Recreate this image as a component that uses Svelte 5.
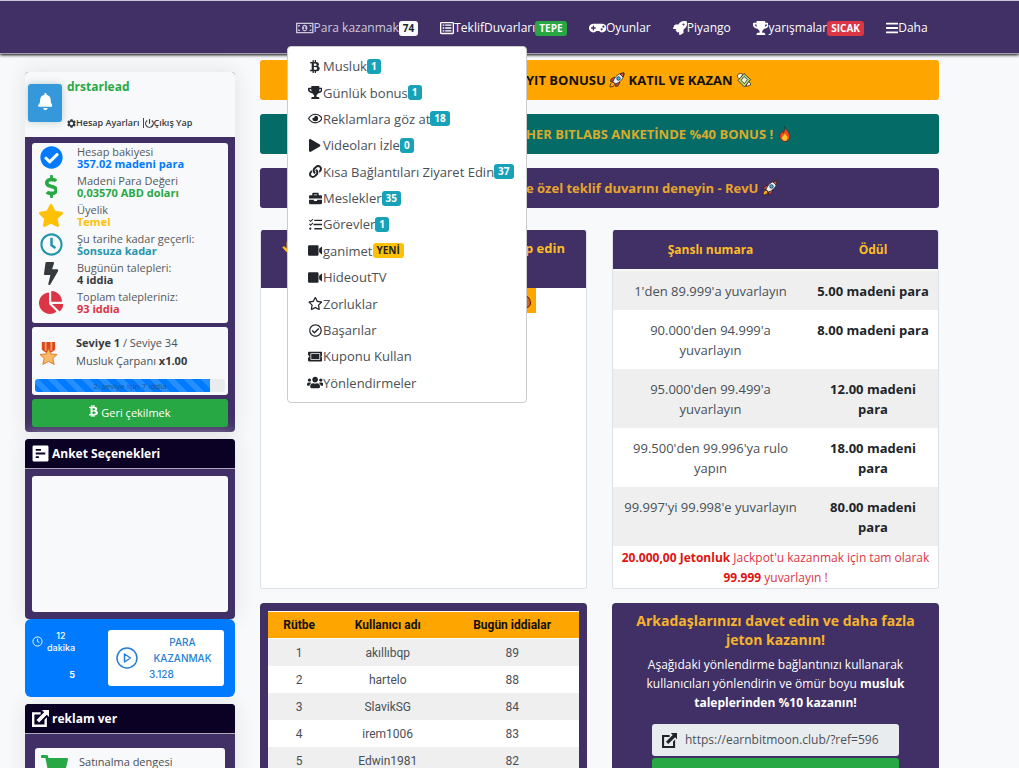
<script lang="ts">
  interface Badge {
    text: string;
    tone: string;
  }

  interface Item {
    icon: string;
    label: string;
    badge?: Badge;
  }

  // [viewBox width, path], every icon is 512 high
  const ICONS: Record<string, [number, string]> = {
    bill: [640, 'M0 64h640v384H0zM48 112v288h544V112zM80 144h70a70 70 0 0 1-70 70zM560 144v70a70 70 0 0 1-70-70zM80 368v-70a70 70 0 0 1 70 70zM560 368h-70a70 70 0 0 1 70-70zM320 136c56 0 98 54 98 120s-42 120-98 120-98-54-98-120 42-120 98-120zM276 190v36h22v68h-26v34h96v-34h-26V190h-34z'],
    list: [512, 'M48 32h416a48 48 0 0 1 48 48v352a48 48 0 0 1-48 48H48a48 48 0 0 1-48-48V80a48 48 0 0 1 48-48zM48 80v352h416V80zM96 128h64v48H96zM192 128h224v48H192zM96 232h64v48H96zM192 232h224v48H192zM96 336h64v48H96zM192 336h224v48H192z'],
    gamepad: [640, 'M480.07 96H160a160 160 0 1 0 114.24 272h91.5A160 160 0 1 0 480.07 96zM248 268a12 12 0 0 1-12 12h-52v52a12 12 0 0 1-12 12h-24a12 12 0 0 1-12-12v-52H84a12 12 0 0 1-12-12v-24a12 12 0 0 1 12-12h52v-52a12 12 0 0 1 12-12h24a12 12 0 0 1 12 12v52h52a12 12 0 0 1 12 12zm216 76a40 40 0 1 1 40-40 40 40 0 0 1-40 40zm64-96a40 40 0 1 1 40-40 40 40 0 0 1-40 40z'],
    rocket: [512, 'M505 19c-1-5-7-11-12-12C461 0 435 0 410 0 307 0 245 55 199 128H95c-16 0-36 12-43 26L3 253a28 28 0 0 0-3 11 24 24 0 0 0 24 24h104l-23 22c-11 12-13 33 0 46l51 51c11 11 32 13 45 0l23-23v104a24 24 0 0 0 24 24 29 29 0 0 0 11-3l98-49c15-7 27-26 27-43V313c72-47 128-109 128-211 0-26 0-51-7-83zM384 168a40 40 0 1 1 40-40 40 40 0 0 1-40 40z'],
    trophy: [576, 'M552 64H448V24c0-13.3-10.7-24-24-24H152c-13.3 0-24 10.7-24 24v40H24C10.7 64 0 74.7 0 88v56c0 35.7 22.5 72.4 61.9 100.7 31.5 22.7 69.8 37.1 110 41.7C203.3 338.5 240 360 240 360v72h-48c-35.3 0-64 20.7-64 56v12c0 6.6 5.4 12 12 12h296c6.6 0 12-5.4 12-12v-12c0-35.3-28.7-56-64-56h-48v-72s36.7-21.5 68.1-73.6c40.3-4.6 78.6-19 110-41.7 39.3-28.3 61.9-65 61.9-100.7V88c0-13.3-10.7-24-24-24zM99.3 192.8C74.9 175.2 64 155.6 64 144v-16h64.2c1 32.6 5.8 61.2 12.8 86.2-15.1-5.2-29.2-12.4-41.7-21.4zM512 144c0 16.1-17.7 36.1-35.3 48.8-12.5 9-26.7 16.2-41.8 21.4 7-25 11.8-53.6 12.8-86.2H512v16z'],
    bars: [448, 'M16 132h416a16 16 0 0 0 16-16V76a16 16 0 0 0-16-16H16A16 16 0 0 0 0 76v40a16 16 0 0 0 16 16zm0 160h416a16 16 0 0 0 16-16v-40a16 16 0 0 0-16-16H16a16 16 0 0 0-16 16v40a16 16 0 0 0 16 16zm0 160h416a16 16 0 0 0 16-16v-40a16 16 0 0 0-16-16H16a16 16 0 0 0-16 16v40a16 16 0 0 0 16 16z'],
    coin: [384, 'M310.204 242.638c27.73-14.18 45.377-39.39 41.28-81.3-5.358-57.351-52.458-76.573-114.85-81.929V0h-48.528v77.203c-12.605 0-25.525.315-38.444.63V0h-48.53v79.409c-17.842.539-38.622.276-97.37 0v51.678c38.314-.678 58.417-3.14 63.023 21.427v217.429c-2.925 19.492-18.524 16.685-53.255 16.071L3.765 443.68c88.481 0 97.37.315 97.37.315V512h48.53v-67.06c13.234.315 26.154.315 38.444.315V512h48.528v-68.005c81.299-4.412 135.647-24.894 142.895-101.467 5.671-61.446-23.314-88.862-69.326-99.89zM150.608 134.553c27.415 0 113.126-8.507 113.126 48.528 0 54.515-85.71 48.212-113.126 48.212v-96.74zm0 251.776V279.821c32.772 0 133.127-9.138 133.127 53.255-.001 60.186-100.355 53.253-133.127 53.253z'],
    eye: [576, 'M288 144a110.94 110.94 0 0 0-31.24 5 55.4 55.4 0 0 1 7.24 27 56 56 0 0 1-56 56 55.4 55.4 0 0 1-27-7.24A111.71 111.71 0 1 0 288 144zm284.52 97.4C518.29 135.59 410.93 64 288 64S57.68 135.64 3.48 241.41a32.35 32.35 0 0 0 0 29.19C57.71 376.41 165.07 448 288 448s230.32-71.64 284.52-177.41a32.35 32.35 0 0 0 0-29.19zM288 400c-98.65 0-189.09-55-237.93-144C98.91 167 189.34 112 288 112s189.09 55 237.93 144C477.1 345 386.66 400 288 400z'],
    play: [448, 'M424.4 214.7L72.4 6.6C43.8-10.3 0 6.1 0 47.9V464c0 37.5 40.7 60.1 72.4 41.3l352-208c31.4-18.5 31.5-64.1 0-82.6z'],
    link: [512, 'M326.612 185.391c59.747 59.809 58.927 155.698.36 214.59-.11.12-.24.25-.36.37l-67.2 67.2c-59.27 59.27-155.699 59.262-214.96 0-59.27-59.26-59.27-155.7 0-214.96l37.106-37.106c9.84-9.84 26.786-3.3 27.294 10.606.648 17.722 3.826 35.527 9.69 52.721 1.986 5.822.567 12.262-3.783 16.612l-13.087 13.087c-28.026 28.026-28.905 73.66-1.155 101.96 28.024 28.579 74.086 28.749 102.325.51l67.2-67.19c28.191-28.191 28.073-73.757 0-101.83-3.701-3.694-7.429-6.564-10.341-8.569a16.037 16.037 0 0 1-6.947-12.606c-.396-10.567 3.348-21.456 11.698-29.806l21.054-21.055c5.521-5.521 14.182-6.199 20.584-1.731a152.482 152.482 0 0 1 20.522 17.197zM467.547 44.449c-59.261-59.262-155.69-59.27-214.96 0l-67.2 67.2c-.12.12-.25.25-.36.37-58.566 58.892-59.387 154.781.36 214.59a152.454 152.454 0 0 0 20.521 17.196c6.402 4.468 15.064 3.789 20.584-1.731l21.054-21.055c8.35-8.35 12.094-19.239 11.698-29.806a16.037 16.037 0 0 0-6.947-12.606c-2.912-2.005-6.64-4.875-10.341-8.569-28.073-28.073-28.191-73.639 0-101.83l67.2-67.19c28.239-28.239 74.3-28.069 102.325.51 27.75 28.3 26.872 73.934-1.155 101.96l-13.087 13.087c-4.35 4.35-5.769 10.79-3.783 16.612 5.864 17.194 9.042 34.999 9.69 52.721.509 13.906 17.454 20.446 27.294 10.606l37.106-37.106c59.271-59.259 59.271-155.699.001-214.959z'],
    briefcase: [512, 'M320 336c0 8.84-7.16 16-16 16h-96c-8.84 0-16-7.16-16-16v-32H0v128c0 25.6 22.4 48 48 48h416c25.6 0 48-22.4 48-48V304H320v32zm144-208h-80V80c0-25.6-22.4-48-48-48H176c-25.6 0-48 22.4-48 48v48H48c-25.6 0-48 22.4-48 48v80h512v-80c0-25.6-22.4-48-48-48zm-144 0H192V96h128v32z'],
    tasks: [512, 'M208 64h304v56H208zM176 228h336v56H176zM208 392h304v56H208zM0 96l28-28 36 36 76-76 28 28L64 160zM0 248l28-28 36 36 76-76 28 28L64 312zM52 376a44 44 0 1 1 0 88 44 44 0 0 1 0-88z'],
    video: [576, 'M48 48h320a48 48 0 0 1 48 48v320a48 48 0 0 1-48 48H48a48 48 0 0 1-48-48V96a48 48 0 0 1 48-48zM440 190l90-78c24-16 46-3 46 22v244c0 25-22 38-46 22l-90-78z'],
    star: [576, 'M259.3 17.8L194 150.2 47.9 171.5c-26.2 3.8-36.7 36.1-17.7 54.6l105.7 103-25 145.5c-4.5 26.3 23.2 46 46.4 33.7L288 439.6l130.7 68.7c23.2 12.2 50.9-7.4 46.4-33.7l-25-145.5 105.7-103c19-18.5 8.5-50.8-17.7-54.6L382 150.2 316.7 17.8c-11.7-23.6-45.6-23.9-57.4 0z'],
    starLine: [576, 'M528.1 171.5L382 150.2 316.7 17.8c-11.7-23.6-45.6-23.9-57.4 0L194 150.2 47.9 171.5c-26.2 3.8-36.7 36.1-17.7 54.6l105.7 103-25 145.5c-4.5 26.3 23.2 46 46.4 33.7L288 439.6l130.7 68.7c23.2 12.2 50.9-7.4 46.4-33.7l-25-145.5 105.7-103c19-18.5 8.5-50.8-17.7-54.6zM388.6 312.3l23.7 138.4L288 385.4l-124.3 65.3 23.7-138.4-100.6-98 139-20.2 62.2-126 62.2 126 139 20.2-100.6 98z'],
    checkLine: [512, 'M256 8C119.033 8 8 119.033 8 256s111.033 248 248 248 248-111.033 248-248S392.967 8 256 8zm0 48c110.532 0 200 89.451 200 200 0 110.532-89.451 200-200 200-110.532 0-200-89.451-200-200 0-110.532 89.451-200 200-200m140.204 130.267l-22.536-22.718c-4.667-4.705-12.265-4.736-16.97-.068L215.346 303.697l-59.792-60.277c-4.667-4.705-12.265-4.736-16.97-.069l-22.719 22.536c-4.705 4.667-4.736 12.265-.068 16.971l90.781 91.516c4.667 4.705 12.265 4.736 16.97.068l172.589-171.204c4.704-4.668 4.734-12.266.067-16.971z'],
    ticket: [576, 'M128 160h320v192H128V160zm400 96c0 26.51 21.49 48 48 48v96c0 26.51-21.49 48-48 48H48c-26.51 0-48-21.49-48-48v-96c26.51 0 48-21.49 48-48s-21.49-48-48-48v-96c0-26.51 21.49-48 48-48h480c26.51 0 48 21.49 48 48v96c-26.51 0-48 21.49-48 48zm-48-104c0-13.255-10.745-24-24-24H120c-13.255 0-24 10.745-24 24v208c0 13.255 10.745 24 24 24h336c13.255 0 24-10.745 24-24V152z'],
    users: [640, 'M96 224c35.3 0 64-28.7 64-64s-28.7-64-64-64-64 28.7-64 64 28.7 64 64 64zm448 0c35.3 0 64-28.7 64-64s-28.7-64-64-64-64 28.7-64 64 28.7 64 64 64zm32 32h-64c-17.6 0-33.5 7.1-45.1 18.6 40.3 22.1 68.9 62 75.1 109.4h66c17.7 0 32-14.3 32-32v-32c0-35.3-28.7-64-64-64zm-256 0c61.9 0 112-50.1 112-112S381.9 32 320 32 208 82.1 208 144s50.1 112 112 112zm76.8 32h-8.3c-20.8 10-43.9 16-68.5 16s-47.6-6-68.5-16h-8.3C179.6 288 128 339.6 128 403.2V432c0 26.5 21.5 48 48 48h288c26.5 0 48-21.5 48-48v-28.8c0-63.6-51.6-115.2-115.2-115.2zm-223.7-13.4C161.5 263.1 145.6 256 128 256H64c-35.3 0-64 28.7-64 64v32c0 17.7 14.3 32 32 32h65.9c6.3-47.4 34.9-87.3 75.2-109.4z'],
    bell: [448, 'M224 512c35.32 0 63.97-28.65 63.97-64H160.03c0 35.35 28.65 64 63.97 64zm215.39-149.71c-19.32-20.76-55.47-51.99-55.47-154.29 0-77.7-54.48-139.9-127.94-155.16V32c0-17.67-14.32-32-31.98-32s-31.98 14.33-31.98 32v20.84C118.56 68.1 64.08 130.3 64.08 208c0 102.3-36.15 133.53-55.47 154.29-6 6.45-8.66 14.16-8.61 21.71.11 16.4 12.98 32 32.1 32h383.8c19.12 0 32-15.6 32.1-32 .05-7.55-2.61-15.27-8.61-21.71z'],
    cog: [512, 'M487.4 315.7l-42.6-24.6c4.3-23.2 4.3-47 0-70.2l42.6-24.6c4.9-2.8 7.1-8.6 5.5-14-11.1-35.6-30-67.8-54.7-94.6-3.8-4.1-10-5.1-14.8-2.3L380.8 110c-17.9-15.4-38.5-27.3-60.8-35.1V25.8c0-5.6-3.9-10.5-9.4-11.7-36.7-8.2-74.3-7.8-109.2 0-5.5 1.2-9.4 6.1-9.4 11.7V75c-22.2 7.9-42.8 19.8-60.8 35.1L88.7 85.5c-4.9-2.8-11-1.9-14.8 2.3-24.7 26.7-43.6 58.9-54.7 94.6-1.7 5.4.6 11.2 5.5 14L67.3 221c-4.3 23.2-4.3 47 0 70.2l-42.6 24.6c-4.9 2.8-7.1 8.6-5.5 14 11.1 35.6 30 67.8 54.7 94.6 3.8 4.1 10 5.1 14.8 2.3l42.6-24.6c17.9 15.4 38.5 27.3 60.8 35.1v49.2c0 5.6 3.9 10.5 9.4 11.7 36.7 8.2 74.3 7.8 109.2 0 5.5-1.2 9.4-6.1 9.4-11.7v-49.2c22.2-7.9 42.8-19.8 60.8-35.1l42.6 24.6c4.9 2.8 11 1.9 14.8-2.3 24.7-26.7 43.6-58.9 54.7-94.6 1.5-5.5-.7-11.3-5.6-14.1zM256 352a96 96 0 1 1 0-192 96 96 0 0 1 0 192z'],
    power: [512, 'M400 54a248 248 0 1 1-290 1l30 54a184 184 0 1 0 230-1zM224 0h64v272h-64z'],
    check: [512, 'M504 256c0 136.967-111.033 248-248 248S8 392.967 8 256 119.033 8 256 8s248 111.033 248 248zM227.314 387.314l184-184c6.248-6.248 6.248-16.379 0-22.627l-22.627-22.627c-6.248-6.249-16.379-6.249-22.628 0L216 308.118l-70.059-70.059c-6.248-6.248-16.379-6.248-22.628 0l-22.627 22.627c-6.248 6.248-6.248 16.379 0 22.627l104 104c6.249 6.249 16.379 6.249 22.628.001z'],
    dollar: [288, 'M209.2 233.4l-108-31.6C88.7 198.2 80 186.5 80 173.5c0-16.3 13.2-29.5 29.5-29.5h66.3c12.2 0 24.2 3.7 34.2 10.5 6.1 4.1 14.3 3.1 19.5-2l34.8-34c7.1-6.9 6.1-18.4-1.8-24.5C238 74.8 207.4 64.1 176 64V16c0-8.8-7.2-16-16-16h-32c-8.8 0-16 7.2-16 16v48h-2.5C45.8 64-5.4 118.7.5 183.6c4.2 46.1 39.4 83.6 83.8 96.6l102.5 30c12.5 3.7 21.2 15.3 21.2 28.3 0 16.3-13.2 29.5-29.5 29.5h-66.3C100 368 88 364.3 78 357.5c-6.1-4.1-14.3-3.1-19.5 2l-34.8 34c-7.1 6.9-6.1 18.4 1.8 24.5 24.5 19.2 55.1 29.9 86.5 30v48c0 8.8 7.2 16 16 16h32c8.8 0 16-7.2 16-16v-48.2c46.6-.9 90.3-28.6 105.7-72.7 21.5-61.6-14.6-124.8-72.5-141.7z'],
    clock: [512, 'M256 8C119 8 8 119 8 256s111 248 248 248 248-111 248-248S393 8 256 8zm0 448c-110.5 0-200-89.5-200-200S145.5 56 256 56s200 89.5 200 200-89.5 200-200 200zm61.8-104.4l-84.9-61.7c-3.1-2.3-4.9-5.9-4.9-9.7V116c0-6.6 5.4-12 12-12h32c6.6 0 12 5.4 12 12v141.7l66.8 48.6c5.4 3.9 6.5 11.4 2.6 16.8L334.6 349c-3.9 5.3-11.4 6.5-16.8 2.6z'],
    bolt: [320, 'M296 160H180.6l42.6-129.8C227.2 15 215.7 0 200 0H56C44 0 33.8 8.9 32.2 20.8l-32 240C-1.7 275.2 9.5 288 24 288h118.7L96.6 482.5c-3.6 15.2 8 29.5 23.3 29.5 8.4 0 16.4-4.4 20.8-12l176-304c9.3-15.9-2.2-36-20.7-36z'],
    pie: [544, 'M527.79 288H290.5l158.03 158.03c6.04 6.04 15.98 6.53 22.19.68 38.7-36.46 65.32-85.61 73.13-140.86 1.34-9.46-6.51-17.85-16.06-17.85zm-15.83-64.8C503.72 103.74 408.26 8.28 288.8.04 279.68-.59 272 7.1 272 16.24V240h223.77c9.14 0 16.82-7.68 16.19-16.8zM224 288V50.71c0-9.55-8.39-17.4-17.84-16.06C86.99 51.49-4.1 155.6.14 280.37 4.5 408.51 114.83 513.59 243.03 511.98c50.4-.63 96.97-16.87 135.26-44.03 7.9-5.6 8.42-17.23 1.57-24.08L224 288z'],
    poll: [512, 'M56 16h400a40 40 0 0 1 40 40v400a40 40 0 0 1-40 40H56a40 40 0 0 1-40-40V56a40 40 0 0 1 40-40zM112 120v56h160v-56zM112 228v56h288v-56zM112 336v56h96v-56z'],
    external: [512, 'M300 0h212v212l-66-66-232 232-80-80L366 66zM0 64h260v72H72v304h304V290l72-72v294H0z'],
    cart: [576, 'M528.12 301.319l47.273-208C578.806 78.301 567.391 64 551.99 64H159.208l-9.166-44.81C147.758 8.021 137.93 0 126.529 0H24C10.745 0 0 10.745 0 24v16c0 13.255 10.745 24 24 24h69.883l70.248 343.435C147.325 417.1 136 435.222 136 456c0 30.928 25.072 56 56 56s56-25.072 56-56c0-15.674-6.447-29.835-16.824-40h209.647C430.447 426.165 424 440.326 424 456c0 30.928 25.072 56 56 56s56-25.072 56-56c0-22.172-12.888-41.332-31.579-50.405l5.517-24.276c3.413-15.018-8.002-29.319-23.403-29.319H218.117l-6.545-32h293.145c11.206 0 20.92-7.754 23.403-18.681z'],
    down: [448, 'M180 32h88v268l106-106 62 62-212 224L12 256l62-62 106 106z'],
  };

  const info = (text: string): Badge => ({ text, tone: 'info' });

  const NAV: Item[] = [
    { icon: 'list', label: 'TeklifDuvarları', badge: { text: 'TEPE', tone: 'success' } },
    { icon: 'gamepad', label: 'Oyunlar' },
    { icon: 'rocket', label: 'Piyango' },
    { icon: 'trophy', label: 'yarışmalar', badge: { text: 'SICAK', tone: 'danger' } },
    { icon: 'bars', label: 'Daha' },
  ];

  const MENU: Item[] = [
    { icon: 'coin', label: 'Musluk', badge: info('1') },
    { icon: 'trophy', label: 'Günlük bonus', badge: info('1') },
    { icon: 'eye', label: 'Reklamlara göz at', badge: info('18') },
    { icon: 'play', label: 'Videoları İzle', badge: info('0') },
    { icon: 'link', label: 'Kısa Bağlantıları Ziyaret Edin', badge: info('37') },
    { icon: 'briefcase', label: 'Meslekler', badge: info('35') },
    { icon: 'tasks', label: 'Görevler', badge: info('1') },
    { icon: 'video', label: 'ganimet', badge: { text: 'YENİ', tone: 'warning' } },
    { icon: 'video', label: 'HideoutTV' },
    { icon: 'starLine', label: 'Zorluklar' },
    { icon: 'checkLine', label: 'Başarılar' },
    { icon: 'ticket', label: 'Kuponu Kullan' },
    { icon: 'users', label: 'Yönlendirmeler' },
  ];

  const STATS = [
    { icon: 'check', label: 'Hesap bakiyesi', value: '357.02 madeni para', tone: 'primary' },
    { icon: 'dollar', label: 'Madeni Para Değeri', value: '0,03570 ABD doları', tone: 'green' },
    { icon: 'star', label: 'Üyelik', value: 'Temel', tone: 'yellow' },
    { icon: 'clock', label: 'Şu tarihe kadar geçerli:', value: 'Sonsuza kadar', tone: 'teal' },
    { icon: 'bolt', label: 'Bugünün talepleri:', value: '4 iddia', tone: 'dark' },
    { icon: 'pie', label: 'Toplam talepleriniz:', value: '93 iddia', tone: 'red' },
  ];

  const PRIZES = [
    ["1'den 89.999'a yuvarlayın", '5.00 madeni para'],
    ["90.000'den 94.999'a yuvarlayın", '8.00 madeni para'],
    ["95.000'den 99.499'a yuvarlayın", '12.00 madeni para'],
    ["99.500'den 99.996'ya rulo yapın", '18.00 madeni para'],
    ["99.997'yi 99.998'e yuvarlayın", '80.00 madeni para'],
  ];

  const LEADERS: [string, number][] = [
    ['akıllıbqp', 89],
    ['hartelo', 88],
    ['SlavikSG', 84],
    ['irem1006', 83],
    ['Edwin1981', 82],
  ];

  const progress = 92;
  let menuOpen = $state(true);
</script>

{#snippet icon(name: string)}
  <svg class="icon" viewBox="0 0 {ICONS[name][0]} 512" aria-hidden="true">
    <path fill-rule="evenodd" d={ICONS[name][1]} />
  </svg>
{/snippet}

{#snippet badge(b?: Badge)}
  {#if b}<span class="badge {b.tone}">{b.text}</span>{/if}
{/snippet}

{#snippet rocketEmoji()}
  <svg class="emoji" viewBox="0 0 32 32" aria-hidden="true" stroke="#222" stroke-width="1.5" stroke-linejoin="round">
    <path fill="#e8453c" d="M12 10 4 14l-1 5 7-1zM22 20l-4 8-5 1 1-7z" />
    <path fill="#e7edf1" d="M8 19C11 10 19 2 30 2c0 11-8 19-17 22z" />
    <path fill="#e8453c" d="M22 4c3-1.500 5-2 8-2 0 3-.5 5-2 8z" />
    <circle cx="19" cy="13" r="3.500" fill="#35b8f1" />
    <path fill="#ffa51f" d="M8 20c-4 1-6 5-6 10 5 0 9-2 10-6z" />
  </svg>
{/snippet}

<nav class="navbar">
  <div class="nav-item">
    <button class="nav-link active" aria-expanded={menuOpen} onclick={() => (menuOpen = !menuOpen)}>
      {@render icon('bill')}Para kazanmak{@render badge({ text: '74', tone: 'light' })}
    </button>
    {#if menuOpen}
      <ul class="menu">
        {#each MENU as item}
          <li>
            <a href="#menu">
              <span class="menu-icon">{@render icon(item.icon)}</span>{item.label}{@render badge(item.badge)}
            </a>
          </li>
        {/each}
      </ul>
    {/if}
  </div>
  {#each NAV as item}
    <a class="nav-link" href="#nav">{@render icon(item.icon)}{item.label}{@render badge(item.badge)}</a>
  {/each}
</nav>

<div class="page">
  <aside>
    <section class="card account">
      <header class="profile">
        <button class="bell" aria-label="Bildirimler">{@render icon('bell')}</button>
        <div class="who">
          <strong>drstarlead</strong>
          <div class="links">
            <a href="#settings">{@render icon('cog')}Hesap Ayarları</a>
            <i></i><a href="#logout">{@render icon('power')}Çıkış Yap</a>
          </div>
        </div>
      </header>
      <div class="body">
        <div class="box stats">
          {#each STATS as stat}
            <div class="stat {stat.tone}">
              <span class="stat-icon">{@render icon(stat.icon)}</span>
              <div><span>{stat.label}</span><b>{stat.value}</b></div>
            </div>
          {/each}
        </div>
        <div class="box level">
          <div class="level-row">
            <svg class="medal" viewBox="0 0 20 26" aria-hidden="true">
              <path fill="#d9481c" d="M3 1h14v8l-4 3H7L3 9z" />
              <path fill="#f59a6c" d="M6 1h2v9H6zM12 1h2v9h-2z" />
              <path fill="#fbb867" stroke="#d9782d" d="m10 8 2.500 5.500 6.500 .5-4.500 4.200 1.500 6.300L10 21.300 4 24.500 5.500 18.200 1 14l6.500-.5z" />
            </svg>
            <p><b>Seviye 1</b> / Seviye 34<br />Musluk Çarpanı <b>x1.00</b></p>
          </div>
          <div class="progress">
            <div class="fill" style="width: {progress}%"></div>
            <span>2. seviye için 7 iddia</span>
          </div>
        </div>
        <button class="withdraw">{@render icon('coin')} Geri çekilmek</button>
      </div>
    </section>

    <section class="card">
      <h2>{@render icon('poll')} Anket Seçenekleri</h2>
      <div class="body"><div class="box empty"></div></div>
    </section>

    <section class="survey">
      <div class="time">
        <svg viewBox="0 0 12 12" fill="none" stroke="currentColor" aria-hidden="true">
          <circle cx="6" cy="6" r="5" /><path d="M6 3v3l2 1" />
        </svg>
        <span>12<br />dakika</span>
        <b>5</b>
      </div>
      <button class="earn">
        <svg viewBox="0 0 22 22" fill="none" stroke="currentColor" stroke-width="1.500" aria-hidden="true">
          <circle cx="11" cy="11" r="10" /><path stroke-linejoin="round" d="M8.500 7v8l6-4z" />
        </svg>
        <span>PARA KAZANMAK <em>3.128</em></span>
      </button>
    </section>

    <section class="card ads">
      <h2>{@render icon('external')} reklam ver</h2>
      <div class="body">
        <div class="box buy"><span>{@render icon('cart')}</span>Satınalma dengesi</div>
      </div>
    </section>
  </aside>

  <main>
    <div class="banner orange">
      YIT BONUSU {@render rocketEmoji()} KATIL VE KAZAN
      <svg class="emoji" viewBox="0 0 32 32" aria-hidden="true" stroke="#222" stroke-width="1.5" stroke-linejoin="round">
        <path fill="#f3f6e8" d="M3 6c4-4 8-4 11-1l-6 9c-4-1-6-4-5-8zM22 20c5-1 8 1 7 6l-8 3z" />
        <path fill="#b9d77c" d="m16 3 13 12-12 15L4 17z" />
        <path fill="#eef4da" d="m16 9 7 6-6 8-7-6z" />
      </svg>
    </div>
    <div class="banner green">
      HER BITLABS ANKETİNDE %40 BONUS !
      <svg class="emoji" viewBox="0 0 32 32" aria-hidden="true">
        <path fill="#f04a16" stroke="#222" d="M15 1c1 6 8 8 10 16 3 8-3 14-9 14S4 26 6 18c1-3 3-5 3-8l4 4c2-4 3-8 2-13z" />
        <path fill="#ffc531" d="M16 14c1 5 6 6 5 11-1 3-3 5-5 5s-6-2-6-6 5-5 6-10z" />
      </svg>
    </div>
    <div class="banner purple">e özel teklif duvarını deneyin - RevU {@render rocketEmoji()}</div>

    <div class="columns">
      <section class="claim">
        <header>{@render icon('down')}<span>talep edin</span></header>
        <div class="claim-note">
          <svg class="emoji" viewBox="0 0 32 32" aria-hidden="true">
            <path fill="#d9641e" stroke="#4a1608" stroke-width="2" d="M15 2c9 4 14 11 14 18 0 6-5 10-13 10S3 25 3 19z" />
          </svg>
        </div>
      </section>

      <section class="prizes">
        <table>
          <thead>
            <tr><th>Şanslı numara</th><th>Ödül</th></tr>
          </thead>
          <tbody>
            {#each PRIZES as [range, prize]}
              <tr><td>{range}</td><td><b>{prize}</b></td></tr>
            {/each}
          </tbody>
        </table>
        <p><b>20.000,00 Jetonluk</b> Jackpot'u kazanmak için tam olarak <b>99.999</b> yuvarlayın !</p>
      </section>

      <section class="leaders">
        <table>
          <thead>
            <tr><th>Rütbe</th><th>Kullanıcı adı</th><th>Bugün iddialar</th></tr>
          </thead>
          <tbody>
            {#each LEADERS as [name, claims], i}
              <tr><td>{i + 1}</td><td>{name}</td><td>{claims}</td></tr>
            {/each}
          </tbody>
        </table>
      </section>

      <section class="invite">
        <h3>Arkadaşlarınızı davet edin ve daha fazla jeton kazanın!</h3>
        <p>
          Aşağıdaki yönlendirme bağlantınızı kullanarak kullanıcıları yönlendirin ve ömür boyu
          <b>musluk taleplerinden %10 kazanın!</b>
        </p>
        <label class="ref">
          {@render icon('external')}
          <input aria-label="Yönlendirme bağlantısı" readonly value="https://earnbitmoon.club/?ref=596" />
        </label>
        <button class="copy" aria-label="Bağlantıyı kopyala"></button>
      </section>
    </div>
  </main>
</div>

<style>
  :global(body) {
    margin: 0;
    background: #f8f9fa;
    color: #495057;
    font: 13px/20px 'Open Sans', 'Noto Sans', sans-serif;
  }

  :global(#app) {
    height: 100vh;
    overflow: hidden;
  }

  * {
    box-sizing: border-box;
  }

  a {
    color: inherit;
    text-decoration: none;
  }

  button {
    border: 0;
    padding: 0;
    background: none;
    color: inherit;
    font: inherit;
    cursor: pointer;
  }

  table {
    width: 100%;
    border-collapse: collapse;
    table-layout: fixed;
    text-align: center;
  }

  .icon {
    height: 1em;
    fill: currentColor;
    flex-shrink: 0;
  }

  .emoji {
    width: 16px;
    height: 16px;
    vertical-align: -3px;
  }

  .navbar {
    position: relative;
    z-index: 2;
    display: flex;
    align-items: center;
    gap: 22px;
    height: 54px;
    padding-top: 2px;
    padding-left: 296px;
    background: #413065;
    border-top: 1px solid #c9c5d2;
    border-bottom: 1px solid #a59eb4;
    box-shadow: 0 1px 3px #000;
    color: #fff;
  }

  .nav-item {
    position: relative;
  }

  .nav-link {
    display: flex;
    align-items: center;
    font-size: 12px;
    white-space: nowrap;
  }

  .nav-link .icon {
    height: 14px;
  }

  .nav-link.active {
    color: #cfc9dc;
  }

  .badge {
    padding: 0 4px;
    border-radius: 3px;
    color: #fff;
    font-size: 10px;
    font-weight: 700;
    line-height: 15px;
  }

  .badge.light {
    background: #f8f9fa;
    color: #212529;
  }

  .badge.success {
    background: #28a745;
  }

  .badge.danger {
    background: #dc3545;
  }

  .badge.info {
    background: #17a2b8;
  }

  .badge.warning {
    background: #ffc107;
    color: #212529;
  }

  .menu {
    position: absolute;
    top: 28px;
    left: -9px;
    display: grid;
    grid-auto-rows: 1fr;
    width: 240px;
    height: 357px;
    margin: 0;
    padding: 6px 0;
    border: 1px solid #ccc;
    border-radius: 4px;
    background: #fff;
    color: #495057;
    list-style: none;
  }

  .menu a {
    display: flex;
    align-items: center;
    height: 100%;
    padding-left: 19px;
    white-space: nowrap;
  }

  .menu-icon {
    display: flex;
    justify-content: center;
    width: 16px;
    color: #212529;
  }

  .page {
    display: grid;
    grid-template-columns: 210px 1fr;
    gap: 25px;
    padding: 6px 80px 0 25px;
  }

  aside {
    padding-top: 12px;
  }

  .card {
    margin-bottom: 7px;
    border-radius: 4px;
    background: #413065;
    box-shadow: 0 0 20px #dfe1e4;
    overflow: hidden;
  }

  .body {
    padding: 7px;
  }

  .box {
    border-radius: 3px;
    background: #f8f9fa;
  }

  .profile {
    display: flex;
    gap: 5px;
    height: 65px;
    padding: 5px 3px;
    background: #f8f9fa;
  }

  .bell {
    width: 34px;
    height: 38px;
    margin-top: 7px;
    border-radius: 3px;
    background: #3498db;
    box-shadow: 0 0 8px #bcc;
    color: #fff;
    font-size: 17px;
  }

  .who strong {
    display: block;
    color: #28a745;
    font-size: 12px;
    margin-bottom: 20px;
  }

  .links,
  .links a {
    display: flex;
    align-items: center;
  }

  .links {
    color: #343a40;
    font-size: 9px;
    font-weight: 600;
    line-height: 12px;
    white-space: nowrap;
  }

  .links i {
    width: 1px;
    height: 10px;
    margin: 0 1px 0 3px;
    background: #8a2a20;
  }

  .stats {
    padding: 0 0 6px;
  }

  .stat {
    display: flex;
    align-items: center;
    height: 29px;
    padding-left: 6px;
    font-size: 11px;
    line-height: 12px;
  }

  .stat-icon {
    display: flex;
    justify-content: center;
    width: 26px;
    margin-right: 13px;
    font-size: 23px;
  }

  .stat div span,
  .stat div b {
    display: block;
  }

  .stat div span {
    color: #55595e;
  }

  .primary {
    color: #007bff;
  }

  .green {
    color: #28a745;
  }

  .yellow {
    color: #ffc107;
  }

  .teal {
    color: #2596ac;
  }

  .dark {
    color: #343a40;
  }

  .red {
    color: #dc3545;
  }

  .level {
    margin-top: 4px;
    padding: 7px 3px 3px;
  }

  .level-row {
    display: flex;
    align-items: center;
    gap: 18px;
    height: 45px;
    padding-left: 4px;
    font-size: 11px;
    line-height: 18px;
  }

  .level-row p {
    margin: 0 0 10px;
  }

  .level-row b {
    color: #343a40;
  }

  .medal {
    width: 19px;
    height: 25px;
    margin-bottom: 6px;
  }

  .progress {
    position: relative;
    height: 13px;
    border-radius: 3px;
    background: #e9ecef;
    overflow: hidden;
  }

  .fill {
    height: 100%;
    background: repeating-linear-gradient(45deg, #007bff 0 6px, #268fff 6px 12px);
  }

  .progress span {
    position: absolute;
    inset: 0;
    color: #24558c;
    font-size: 8px;
    line-height: 13px;
    text-align: center;
  }

  .withdraw {
    width: 100%;
    height: 28px;
    margin-top: 4px;
    border-radius: 3px;
    background: #28a745;
    color: #fff;
    font-size: 11px;
  }

  .withdraw .icon {
    height: 12px;
  }

  .account .body {
    padding: 6px 7px 5px;
  }

  h2 {
    display: flex;
    align-items: center;
    gap: 3px;
    height: 30px;
    margin: 0;
    padding-left: 7px;
    border-bottom: 1px solid #aba6ba;
    background: #0a0124;
    color: #fff;
    font-size: 12px;
  }

  h2 .icon {
    height: 17px;
  }

  .empty {
    height: 136px;
  }

  .survey {
    position: relative;
    display: grid;
    grid-template-columns: 72px 1fr;
    gap: 4px;
    height: 78px;
    margin: -7px 0 7px;
    padding: 11px 11px 11px 7px;
    border-radius: 6px;
    background: #007bff;
    color: #fff;
    font: 500 9px/12px Inter, sans-serif;
  }

  .time {
    display: grid;
    grid-template-columns: 15px 28px;
    align-content: space-between;
    padding-bottom: 5px;
    text-align: center;
  }

  .time svg {
    width: 11px;
    margin-top: 6px;
  }

  .time b {
    grid-column: 2;
    text-align: right;
  }

  .earn {
    display: grid;
    grid-template-columns: 22px 1fr;
    align-items: center;
    gap: 11px;
    padding: 0 8px;
    border-radius: 3px;
    background: #fff;
    color: #257fd8;
    font-size: 10px;
    line-height: 16px;
  }

  .earn em {
    display: block;
    font-style: normal;
    text-align: left;
  }

  .ads .body {
    padding: 14px 10px;
  }

  .buy {
    display: flex;
    gap: 11px;
    height: 48px;
    padding: 4px 6px;
    font-size: 11px;
  }

  .buy span {
    display: flex;
    padding-top: 3px;
    color: #28a745;
    font-size: 24px;
  }

  .banner {
    height: 40px;
    margin-bottom: 14px;
    padding-left: 266px;
    border-radius: 3px;
    color: #e8a52c;
    font-weight: 700;
    line-height: 40px;
    white-space: nowrap;
  }

  .banner.orange {
    background: #ffa500;
    color: #111;
  }

  .banner.green {
    background: #046b66;
    color: #d8ab2c;
  }

  .banner.purple {
    margin-bottom: 22px;
    background: #413065;
  }

  .columns {
    display: grid;
    grid-template-columns: 1fr 1fr;
    gap: 14px 25px;
  }

  .claim,
  .prizes {
    border: 1px solid #dee2e6;
    border-top: 0;
    border-radius: 3px;
    background: #fff;
    overflow: hidden;
  }

  .claim header {
    display: flex;
    justify-content: space-between;
    height: 58px;
    padding: 8px 21px;
    background: #413065;
    color: #fcbd25;
    font-weight: 700;
  }

  .claim header .icon {
    margin-top: 3px;
  }

  .claim-note {
    display: flex;
    align-items: center;
    justify-content: flex-end;
    width: 224px;
    height: 25px;
    margin: 0 auto;
    padding-right: 4px;
    background: #ffa500;
  }

  .prizes th {
    width: 60%;
    padding: 10px 8px 9px;
    border-bottom: 2px solid #f8f9fa;
    background: #413065;
    color: #fcbd25;
    font-size: 12px;
  }

  .prizes th + th {
    width: 40%;
  }

  .prizes td {
    padding: 10px 8px 9px;
    vertical-align: top;
  }

  tbody tr:nth-child(odd) {
    background: #efefef;
  }

  .prizes b {
    color: #212529;
  }

  .prizes p {
    margin: 0;
    padding-top: 2px;
    color: #dc3545;
    font-size: 12px;
    text-align: center;
  }

  .prizes p b {
    color: #e01212;
  }

  .leaders,
  .invite {
    border-radius: 4px;
    background: #413065;
  }

  .leaders {
    padding: 8px;
    font: 12px/20px Roboto, sans-serif;
  }

  .leaders table {
    background: #fff;
  }

  .leaders th {
    padding: 4px 0;
    background: #ffa500;
    border: solid #fff;
    border-width: 1px 0;
    color: #111;
    line-height: 18px;
  }

  .leaders th:first-child {
    width: 20%;
  }

  .leaders th:last-child {
    width: 43%;
  }

  .leaders td {
    padding: 4px 0 3px;
  }

  .invite {
    padding: 8px 20px;
    color: #fff;
    text-align: center;
  }

  .invite h3 {
    margin: 0 0 6px;
    color: #f6b42c;
    font-size: 14px;
    line-height: 19px;
  }

  .invite p {
    margin: 0 14px 12px;
    font-size: 12px;
    line-height: 19px;
  }

  .ref {
    display: flex;
    align-items: center;
    gap: 8px;
    height: 32px;
    margin: 0 20px 2px;
    padding: 0 10px;
    border-radius: 3px;
    background: #e9ecef;
    color: #212529;
    font-size: 15px;
  }

  .ref input {
    flex: 1;
    min-width: 0;
    padding: 0;
    border: 0;
    background: none;
    color: #495057;
    font: 12px/20px 'Open Sans', 'Noto Sans', sans-serif;
  }

  .copy {
    display: block;
    width: calc(100% - 40px);
    height: 32px;
    margin: 0 20px;
    border-radius: 3px;
    background: #28a745;
  }
</style>
